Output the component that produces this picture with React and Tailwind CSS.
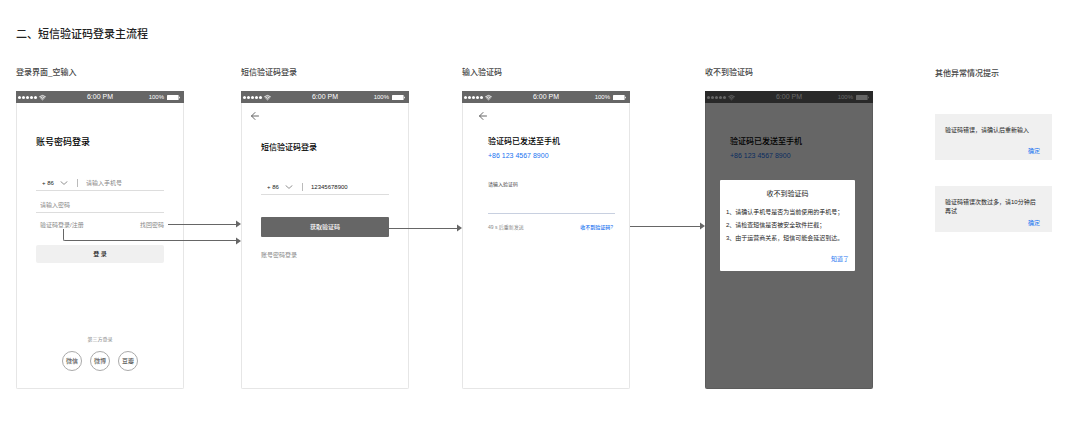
import React from "react";
import { ArrowLeft, Wifi } from "lucide-react";

const StatusBar = () => (
  <div className="grid h-3 grid-cols-3 items-center bg-[#666] px-[2px] text-white">
    <div className="flex items-center gap-px">
      {[1, 2, 3, 4, 5].map((dot) => (
        <span key={dot} className="h-[3px] w-[3px] rounded-full bg-white" />
      ))}
      <Wifi className="ml-px h-[7px] w-[7px]" strokeWidth={3} />
    </div>
    <span className="text-center text-[7px] leading-3">6:00 PM</span>
    <div className="flex items-center justify-end gap-[3px] pr-[2px]">
      <span className="text-[6px] leading-3">100%</span>
      <svg viewBox="0 0 13 5" className="h-[5px] w-[13px]" fill="currentColor">
        <rect x="0" y="0" width="11.6" height="5" rx="0.6" />
        <rect x="12" y="1.5" width="0.8" height="2" rx="0.4" />
      </svg>
    </div>
  </div>
);

/* One step of the flow: caption above, phone frame below */
const Screen = ({ title, children }) => (
  <section className="flex min-w-0 flex-col">
    <h2 className="mb-3 whitespace-nowrap text-[8px] leading-3 font-medium text-[#444]">{title}</h2>
    <div className="relative flex flex-1 flex-col overflow-hidden rounded-b-[2px] bg-white">
      <StatusBar />
      <div className="flex flex-1 flex-col border border-t-0 border-[#e6e6e6]">{children}</div>
    </div>
  </section>
);

const ArrowHead = () => (
  <svg viewBox="0 0 5 8" className="h-2 w-[5px] shrink-0" fill="#666">
    <path d="M0 0.6 L5 4 L0 7.4 Z" />
  </svg>
);

/* Horizontal connector, placed over the gutter between two screens */
const Connector = ({ className }) => (
  <div className={`absolute right-0 z-10 flex h-2 items-center ${className}`}>
    <span className="h-px flex-1 bg-[#666]" />
    <ArrowHead />
  </div>
);

const BackButton = ({ className }) => (
  <button type="button" aria-label="返回" className={`block h-3 w-3 text-[#666] ${className}`}>
    <ArrowLeft className="h-3 w-3" strokeWidth={2} />
  </button>
);

const PhoneField = ({ value, className }) => (
  <div className={`flex h-4 items-center border-b border-[#ddd] pl-[6px] ${className}`}>
    <div className="relative w-[26px]">
      <select
        aria-label="国家代码"
        className="block w-full appearance-none text-[6px] leading-3 font-medium text-[#222] outline-none"
      >
        <option>+ 86</option>
      </select>
      <svg
        viewBox="0 0 8 4"
        className="pointer-events-none absolute top-1 right-0 h-1 w-2"
        fill="none"
        stroke="#888"
        strokeWidth="0.9"
      >
        <path d="M0.6 0.4 L4 3.4 L7.4 0.4" />
      </svg>
    </div>
    <span className="mr-2 ml-[9px] h-2 w-px bg-[#bbb]" />
    <input
      type="tel"
      aria-label="手机号"
      placeholder="请输入手机号"
      defaultValue={value}
      className="h-3 min-w-0 flex-1 text-[6px] text-[#222] outline-none placeholder:text-[#888]"
    />
  </div>
);

const PasswordLogin = () => (
  <form className="flex flex-1 flex-col px-[19px] pt-[33px] pb-[17px]">
    <h3 className="text-[9px] leading-3 font-medium text-black">账号密码登录</h3>
    <PhoneField className="mt-[27px]" />
    <input
      type="password"
      aria-label="密码"
      placeholder="请输入密码"
      className="mt-[6px] h-4 border-b border-[#ddd] pl-1 text-[6px] outline-none placeholder:text-[#888]"
    />
    <div className="mt-[6px] flex justify-between pl-1 text-[6px] leading-3 text-[#888]">
      <a href="#sms">验证码登录/注册</a>
      <a href="#reset">找回密码</a>
    </div>
    <button type="button" className="mt-[14px] h-[18px] rounded-[2px] bg-[#f0f0f0] text-[6px] font-medium text-[#222]">
      登 录
    </button>
    <div className="mt-auto pt-[70px] text-center text-[5px] leading-3 text-[#888]">第三方登录</div>
    <div className="mt-[6px] flex justify-center gap-2">
      {["微信", "微博", "豆瓣"].map((name) => (
        <button
          key={name}
          type="button"
          className="h-5 w-5 rounded-full border border-[#aaa] text-[6px] leading-none text-[#333]"
        >
          {name}
        </button>
      ))}
    </div>
  </form>
);

const SmsLogin = () => (
  <>
    <BackButton className="mt-[7px] ml-[7px]" />
    <form className="flex flex-col px-[19px] pt-5">
      <h3 className="text-[8px] leading-3 font-medium text-black">短信验证码登录</h3>
      <PhoneField value="12345678900" className="mt-[25px]" />
      <button type="button" className="mt-[22px] h-5 rounded-[1px] bg-[#666] text-[6px] font-medium text-white">
        获取验证码
      </button>
      <a href="#password" className="mt-3 self-start text-[6px] leading-3 text-[#888]">
        账号密码登录
      </a>
    </form>
  </>
);

const SentTo = () => (
  <>
    <h3 className="text-[8px] leading-3 font-medium whitespace-nowrap text-black">验证码已发送至手机</h3>
    <a href="tel:+8612345678900" className="mt-[2px] block text-[7px] leading-3 text-[#1a73f0]">
      +86 123 4567 8900
    </a>
  </>
);

const CodeForm = () => (
  <form className="flex flex-col pt-[14px] pr-[14px] pl-[25px]">
    <SentTo />
    <label htmlFor="code" className="mt-4 text-[5px] leading-3 text-[#444]">
      请输入验证码
    </label>
    <input id="code" inputMode="numeric" className="h-6 border-b border-[#c8d0e0] text-[8px] outline-none" />
    <div className="mt-[7px] flex justify-between pr-[2px] text-[5px] leading-3 text-[#888]">
      <span>49 s 后重新发送</span>
      <a href="#help" className="font-medium text-[#1a73f0]">
        收不到验证码?
      </a>
    </div>
  </form>
);

const tips = [
  "1、请确认手机号是否为当前使用的手机号；",
  "2、请检查短信是否被安全软件拦截；",
  "3、由于运营商关系，短信可能会延迟到达。",
];

const HelpDialog = () => (
  <div className="absolute inset-0 bg-black/60 pt-[89px] pr-[18px] pl-[15px]">
    <div role="dialog" aria-label="收不到验证码" className="rounded-[1px] bg-white px-[6px] pt-2 pb-[6px]">
      <h3 className="text-center text-[7px] leading-3 text-[#222]">收不到验证码</h3>
      <ul className="mt-[6px] text-[6px] leading-[13px] whitespace-nowrap text-[#222]">
        {tips.map((tip) => (
          <li key={tip}>{tip}</li>
        ))}
      </ul>
      <button type="button" className="mt-2 ml-auto block text-[6px] leading-3 text-[#1a73f0]">
        知道了
      </button>
    </div>
  </div>
);

const Notice = ({ children, className }) => (
  <div className={`flex h-[46px] flex-col justify-between bg-[#f0f0f0] pt-3 pr-3 pb-1 pl-[10px] ${className}`}>
    <p className="text-[6px] leading-[9px] text-[#222]">{children}</p>
    <button type="button" className="self-end text-[6px] leading-[9px] text-[#1a73f0]">
      确定
    </button>
  </div>
);

export default function App() {
  return (
    <main className="bg-white pt-[26px] pr-7 pb-10 pl-4 font-['Liberation_Sans','Noto_Sans_CJK_SC',sans-serif]">
      <h1 className="mb-[25px] text-[11px] leading-4 font-medium text-[#222]">二、短信验证码登录主流程</h1>

      <div className="grid grid-cols-[168fr_57fr_168fr_53fr_168fr_75fr_168fr_62fr_117fr]">
        <Screen title="登录界面_空输入">
          <PasswordLogin />
        </Screen>

        <div className="relative">
          <Connector className="top-[153px] -left-4" />
          {/* Elbow from the sms login link */}
          <div className="absolute top-[162px] right-0 -left-[121px] z-10 flex items-end">
            <span className="h-3 flex-1 rounded-bl-[2px] border-b border-l border-[#666]" />
            <span className="-mb-[4px]">
              <ArrowHead />
            </span>
          </div>
        </div>

        <Screen title="短信验证码登录">
          <SmsLogin />
        </Screen>

        <div className="relative">
          <Connector className="top-[157px] -left-5" />
        </div>

        <Screen title="输入验证码">
          <BackButton className="mt-[7px] ml-[14px]" />
          <CodeForm />
        </Screen>

        <div className="relative">
          <Connector className="top-[155px] left-0" />
        </div>

        <Screen title="收不到验证码">
          <div className="pt-[33px] pl-6">
            <SentTo />
          </div>
          <HelpDialog />
        </Screen>

        <div />

        <section className="min-w-0 pt-px">
          <h2 className="text-[8px] leading-3 font-medium whitespace-nowrap text-[#444]">其他异常情况提示</h2>
          <Notice className="mt-[34px]">验证码错误，请确认后重新输入</Notice>
          <Notice className="mt-[26px]">验证码错误次数过多，请10分钟后再试</Notice>
        </section>
      </div>
    </main>
  );
}
